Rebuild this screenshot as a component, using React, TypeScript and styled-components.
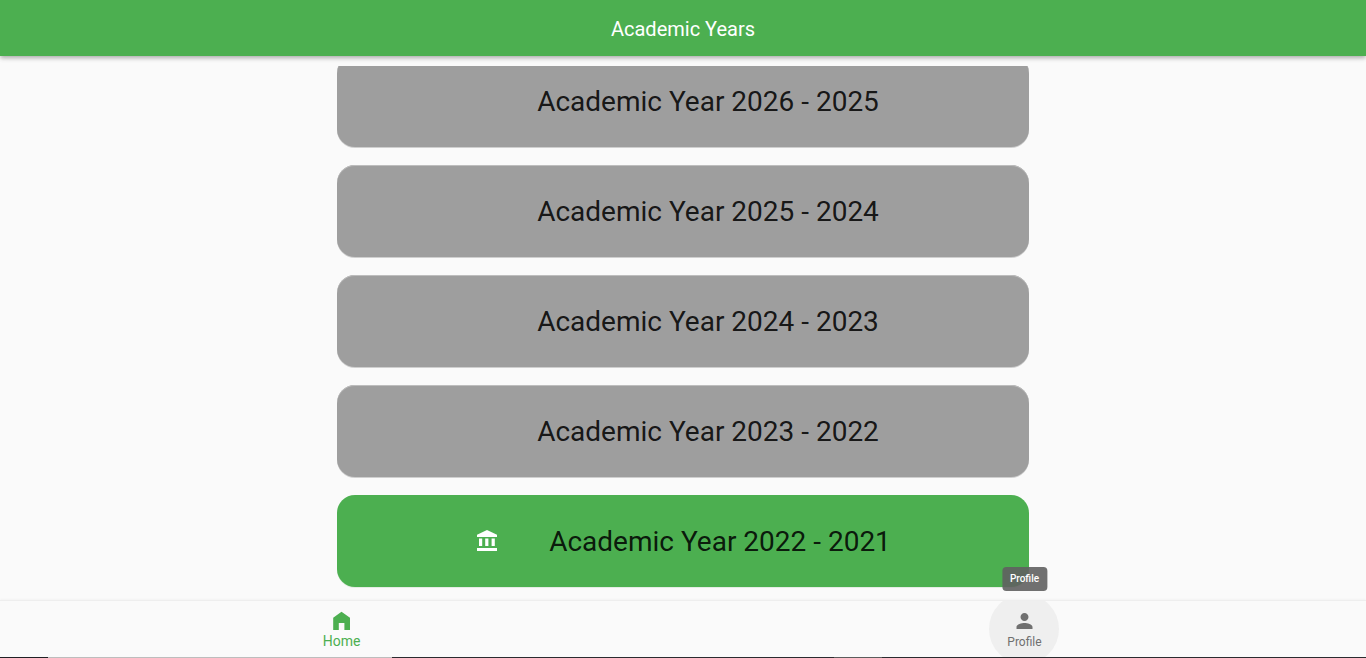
import React from "react";
import styled, { createGlobalStyle, css } from "styled-components";

const GlobalStyle = createGlobalStyle`
  *, *::before, *::after { box-sizing: border-box; }
  body {
    margin: 0;
    background: #fafafa;
    font-family: Roboto, "Liberation Sans", sans-serif;
  }
`;

const Screen = styled.div`
  display: flex;
  flex-direction: column;
  height: 100vh;
`;

const AppBar = styled.header`
  display: flex;
  flex: none;
  align-items: center;
  justify-content: center;
  height: 56px;
  padding-top: 2px;
  background: #4caf50;
  box-shadow: 0 2px 4px -1px rgba(0, 0, 0, 0.2), 0 3px 4px 0 rgba(0, 0, 0, 0.12),
    0 1px 8px 0 rgba(0, 0, 0, 0.06);
`;

const Title = styled.h1`
  margin: 0;
  color: #fff;
  font-size: 20px;
  font-weight: 400;
  line-height: 24px;
`;

const Content = styled.main`
  display: flex;
  flex: 1;
  min-height: 0;
  padding-top: 10px;
`;

const YearList = styled.ul`
  display: flex;
  flex: 1;
  flex-direction: column;
  justify-content: flex-end;
  align-items: center;
  gap: 18px;
  margin: 0;
  padding: 0 0 13px;
  overflow: hidden;
  list-style: none;
`;

const YearItem = styled.li`
  flex: none;
  width: calc(50% + 9px);
`;

const YearCard = styled.button<{ $current?: boolean }>`
  display: flex;
  align-items: center;
  justify-content: center;
  gap: 50px;
  width: 100%;
  height: 92px;
  padding: 0;
  border: 0;
  border-radius: 18px;
  background: ${(p) => (p.$current ? "#4caf50" : "#9e9e9e")};
  box-shadow: 0 1px 0 ${(p) => (p.$current ? "#e4ece4" : "#cfcfcf")}
    ${(p) =>
      !p.$current &&
      css`, inset 0 1px 0 #bdbdbd`};
  color: rgba(0, 0, 0, 0.87);
  font: 400 28px/36px Roboto, "Liberation Sans", sans-serif;
  white-space: nowrap;
  cursor: pointer;
`;

const YearLabel = styled.span`
  padding-top: 2px;
`;

const IconSlot = styled.span`
  display: flex;
  color: #fff;
`;

const Glyph = styled.svg`
  display: block;
  fill: currentColor;
`;

const NavBar = styled.nav`
  position: relative;
  display: flex;
  flex: none;
  height: 57px;
  border-top: 1px solid #eeeeee;
  background: #fafafa;
  box-shadow: 0 -1px 2px rgba(0, 0, 0, 0.03);
`;

const NavItem = styled.button<{ $active?: boolean }>`
  position: relative;
  display: flex;
  flex: 1;
  flex-direction: column;
  align-items: center;
  padding: 8px 0 0;
  border: 0;
  background: none;
  color: ${(p) => (p.$active ? "#4caf50" : "#707070")};
  font: 400 ${(p) => (p.$active ? "14px/16px" : "12px/18px")} Roboto,
    "Liberation Sans", sans-serif;
  cursor: pointer;
`;

const HoverClip = styled.span`
  position: absolute;
  inset: 0;
  display: flex;
  align-items: center;
  justify-content: center;
  padding-right: 1px;
  overflow: hidden;

  &::before {
    content: "";
    flex: none;
    width: 70px;
    height: 70px;
    border-radius: 50%;
    background: #efefef;
  }
`;

const NavGlyph = styled(Glyph)`
  position: relative;
`;

const NavLabel = styled.span`
  position: relative;
`;

const Tooltip = styled.span`
  position: absolute;
  bottom: 100%;
  left: 50%;
  margin-bottom: 10px;
  padding: 4px 8px;
  border-radius: 4px;
  background: rgba(97, 97, 97, 0.9);
  color: #fff;
  font-size: 10px;
  font-weight: 500;
  line-height: 16px;
  transform: translateX(-50%);
`;

const BottomEdge = styled.div`
  flex: none;
  height: 1px;
  background: linear-gradient(
    to right,
    #202024 0 48px,
    #bdbdbd 48px 392px,
    #2b2b2f 392px 834px,
    #5c5c5c 834px 882px,
    #2b2b2f 882px
  );
`;

const years = [
  { label: "2026 - 2025" },
  { label: "2025 - 2024" },
  { label: "2024 - 2023" },
  { label: "2023 - 2022" },
  { label: "2022 - 2021", current: true },
];

function BankIcon() {
  return (
    <Glyph width="24" height="24" viewBox="0 0 24 24" aria-hidden="true">
      <path d="M4 9.500v7.500h3.200V9.500H4zm6.200 0v7.500h3.200V9.500h-3.200zM2 22h20v-3H2v3zM16.600 9.500v7.500h3.200V9.500h-3.200zM12 1L2 5.800V8h20V5.800L12 1z" />
    </Glyph>
  );
}

function HomeIcon() {
  return (
    <NavGlyph width="24" height="24" viewBox="0 0 24 24" aria-hidden="true">
      <path d="M11.500 2.700L3.200 8.800V21h5.600v-7h5.600v7h5.600V8.800z" />
    </NavGlyph>
  );
}

function PersonIcon() {
  return (
    <NavGlyph width="24" height="24" viewBox="0 0 24 24" aria-hidden="true">
      <path
        transform="translate(-0.5 0)"
        d="M12 12c2.210 0 4-1.790 4-4s-1.790-4-4-4-4 1.790-4 4 1.790 4 4 4zm0 2c-2.670 0-8 1.340-8 4v2h16v-2c0-2.660-5.330-4-8-4z"
      />
    </NavGlyph>
  );
}

export default function App() {
  return (
    <Screen>
      <GlobalStyle />
      <AppBar>
        <Title>Academic Years</Title>
      </AppBar>
      <Content>
        <YearList>
          {years.map((year) => (
            <YearItem key={year.label}>
              <YearCard type="button" $current={year.current}>
                <IconSlot>{year.current && <BankIcon />}</IconSlot>
                <YearLabel>Academic Year {year.label}</YearLabel>
              </YearCard>
            </YearItem>
          ))}
        </YearList>
      </Content>
      <NavBar>
        <NavItem type="button" $active aria-current="page">
          <HomeIcon />
          <NavLabel>Home</NavLabel>
        </NavItem>
        <NavItem type="button" aria-describedby="profile-tip">
          <HoverClip />
          <PersonIcon />
          <NavLabel>Profile</NavLabel>
          <Tooltip id="profile-tip" role="tooltip">
            Profile
          </Tooltip>
        </NavItem>
      </NavBar>
      <BottomEdge />
    </Screen>
  );
}
